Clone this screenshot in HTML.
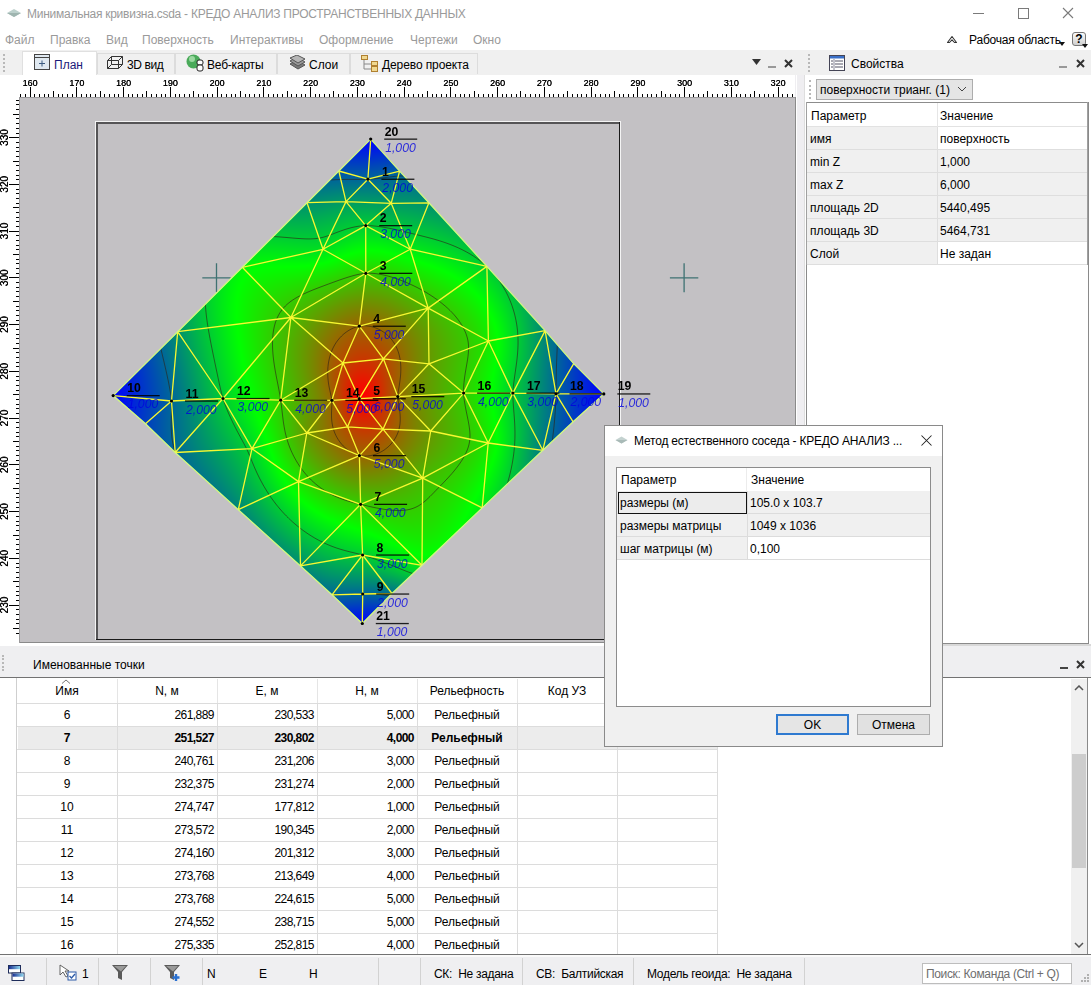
<!DOCTYPE html>
<html><head><meta charset="utf-8">
<style>
html,body{margin:0;padding:0}
body{width:1091px;height:985px;overflow:hidden;position:relative;font-family:"Liberation Sans",sans-serif;font-size:12px;color:#000;background:#fff}
.a{position:absolute;white-space:nowrap}
.t{position:absolute;white-space:nowrap;line-height:14px}
.gray{color:#9a9a9a}
.bg0{background:#f0f0f0}
.grip{position:absolute;width:2px;border-left:2px dotted #b8b8b8}
.tab{position:absolute;top:53px;height:21px;background:#f0f0f0;border:1px solid #dcdcdc;border-bottom:none;box-sizing:border-box}
.tab.act{background:#fff;border-color:#e0e0e0;top:51px;height:25px}
.row{position:absolute;height:23px;box-sizing:border-box;border-bottom:1px solid #e3e3e3}
.cell{position:absolute;top:0;height:22px;line-height:22px;box-sizing:border-box;border-right:1px solid #e3e3e3;white-space:nowrap;overflow:hidden}
</style></head><body>

<!-- title bar -->
<svg class="a" style="left:6px;top:8px" width="16" height="10" viewBox="0 0 16 10"><path d="M1 5 L8 1 L15 5 L8 9 Z" fill="#bcd0cc"/><path d="M1 5 L8 9 L15 5" fill="#9fb5b0"/></svg>
<div class="t gray" style="left:27px;top:7px;letter-spacing:-0.26px">Минимальная кривизна.csda - КРЕДО АНАЛИЗ ПРОСТРАНСТВЕННЫХ ДАННЫХ</div>
<div class="a" style="left:973px;top:13px;width:11px;height:1px;background:#7a7a7a"></div>
<div class="a" style="left:1018px;top:8px;width:9px;height:9px;border:1px solid #7a7a7a"></div>
<svg class="a" style="left:1062px;top:7px" width="12" height="12"><path d="M1 1L11 11M11 1L1 11" stroke="#7a7a7a" stroke-width="1.1"/></svg>

<!-- menu -->
<div class="t gray" style="left:5px;top:33px">Файл</div>
<div class="t gray" style="left:50px;top:33px">Правка</div>
<div class="t gray" style="left:106px;top:33px">Вид</div>
<div class="t gray" style="left:142px;top:33px">Поверхность</div>
<div class="t gray" style="left:230px;top:33px">Интерактивы</div>
<div class="t gray" style="left:319px;top:33px">Оформление</div>
<div class="t gray" style="left:410px;top:33px">Чертежи</div>
<div class="t gray" style="left:473px;top:33px">Окно</div>
<svg class="a" style="left:946px;top:34px" width="12" height="10"><path d="M1.5 8.5 L6 2.5 L10.5 8.5 L8.5 8.5 L6 5.8 L3.5 8.5 Z" stroke="#333" fill="none" stroke-width="1.1" stroke-linejoin="round"/></svg>
<div class="t" style="left:969px;top:33px;letter-spacing:-0.2px">Рабочая область</div>
<svg class="a" style="left:1059px;top:42px" width="6" height="4"><path d="M0 0H6L3 4Z" fill="#111"/></svg><div class="a" style="left:1072px;top:32px;width:14px;height:14px;border:1px solid #777;border-radius:3px;background:linear-gradient(#fafafa,#cfcfcf);box-sizing:border-box;font-weight:bold;font-size:12px;line-height:13px;text-align:center">?</div><svg class="a" style="left:1082px;top:44px" width="6" height="4"><path d="M0 0H6L3 4Z" fill="#111"/></svg>

<!-- document tab strip -->
<div class="a bg0" style="left:0;top:50px;width:805px;height:25px"></div>
<div class="grip" style="left:3px;top:54px;height:18px"></div>
<div class="tab act" style="left:22px;width:75px"></div>
<div class="tab" style="left:97px;width:78px"></div>
<div class="tab" style="left:175px;width:102px"></div>
<div class="tab" style="left:277px;width:73px"></div>
<div class="tab" style="left:350px;width:128px"></div>
<div class="t" style="left:54px;top:58px;color:#1a1a7a">План</div>
<div class="t" style="left:127px;top:58px;letter-spacing:-0.4px">3D вид</div>
<div class="t" style="left:207px;top:58px;letter-spacing:-0.2px">Веб-карты</div>
<div class="t" style="left:309px;top:58px">Слои</div>
<div class="t" style="left:382px;top:58px;letter-spacing:-0.1px">Дерево проекта</div>
<div id="tabicons"><svg class="a" style="left:34px;top:54px" width="17" height="16"><rect x="0.5" y="0.5" width="15" height="15" fill="#dfe8f0" stroke="#444"/><path d="M0.5 3.5H15.5" stroke="#444"/><path d="M8 6.5V12.5M5 9.5H11" stroke="#3b5a80"/></svg><svg class="a" style="left:107px;top:56px" width="17" height="13"><path d="M0.5 4.5H11.5V12.5H0.5Z M0.5 4.5L4.5 0.5H15.5L11.5 4.5 M15.5 0.5V8.5L11.5 12.5 M4.5 0.5V8.5H15.5 M4.5 8.5L0.5 12.5" fill="none" stroke="#333"/></svg><svg class="a" style="left:186px;top:54px" width="18" height="18"><circle cx="7.5" cy="7.5" r="7" fill="#4aaa5a"/><circle cx="6" cy="5" r="3" fill="#9ad8a0"/><rect x="11" y="6" width="6" height="5" rx="2" fill="#fff" stroke="#222"/><rect x="11" y="11" width="6" height="6" rx="2" fill="#fff" stroke="#222"/></svg><svg class="a" style="left:289px;top:55px" width="17" height="15"><path d="M1 9L9 14L16 10L8 5Z" fill="#7a7a7a" stroke="#555"/><path d="M1 6L9 11L16 7L8 2Z" fill="#9a9a9a" stroke="#555"/><path d="M1 3L9 8L16 4L8 0Z" fill="#b5b5b5" stroke="#555"/></svg><svg class="a" style="left:361px;top:55px" width="18" height="17"><path d="M3 4V14H10M3 9H10" stroke="#888" fill="none"/><rect x="0.5" y="0.5" width="6" height="4" fill="#f0d890" stroke="#b08030"/><rect x="10.5" y="6.5" width="6" height="4" fill="#f0d890" stroke="#b08030"/><rect x="10.5" y="11.5" width="6" height="5" fill="#f0d890" stroke="#b08030"/></svg></div><!--/tabicons-->

<!-- map panel controls -->
<svg class="a" style="left:752px;top:59px" width="9" height="6"><path d="M0 0H9L4.5 6Z" fill="#333"/></svg>
<div class="a" style="left:768px;top:66px;width:8px;height:2px;background:#999"></div>
<svg class="a" style="left:784px;top:59px" width="9" height="9"><path d="M1 1L8 8M8 1L1 8" stroke="#333" stroke-width="2"/></svg>

<!-- rulers + map -->
<canvas id="map" class="a" width="797" height="568" style="left:0;top:75px"></canvas>

<!-- gap between map & properties -->
<div class="a" style="left:795px;top:75px;width:10px;height:571px;background:#efeef1"></div><div class="a" style="left:795px;top:97px;width:1px;height:546px;background:#8a8a8a"></div><div class="a" style="left:796px;top:75px;width:1px;height:568px;background:#fff"></div><div class="a" style="left:804px;top:75px;width:1px;height:571px;background:#fff"></div>

<!-- properties panel -->
<div class="a bg0" style="left:805px;top:50px;width:286px;height:25px"></div>
<div class="grip" style="left:808px;top:54px;height:18px"></div>
<div id="propicon"><svg class="a" style="left:829px;top:55px" width="16" height="16"><rect x="0.5" y="0.5" width="15" height="15" fill="#fff" stroke="#445"/><rect x="1" y="1" width="14" height="2.5" fill="#3a70c8"/><path d="M2 6H4M2 9H4M2 12H4M6 6H14M6 9H14M6 12H14" stroke="#556"/><path d="M5 4V15" stroke="#889"/></svg></div><!--/propicon-->
<div class="t" style="left:851px;top:57px">Свойства</div>
<div class="a" style="left:1059px;top:66px;width:8px;height:2px;background:#999"></div>
<svg class="a" style="left:1076px;top:59px" width="9" height="9"><path d="M1 1L8 8M8 1L1 8" stroke="#333" stroke-width="2"/></svg>
<div class="a" style="left:805px;top:75px;width:286px;height:571px;background:#fff"></div>
<div class="a" style="left:804px;top:75px;width:1px;height:571px;background:#dedede"></div><div class="a" style="left:806px;top:102px;width:283px;height:542px;border:1px solid #8a8a8a;box-sizing:border-box"></div><div class="a" style="left:805px;top:644px;width:286px;height:2px;background:#d8d8d8"></div>
<div class="grip" style="left:809px;top:80px;height:19px"></div>
<div class="a" style="left:816px;top:79px;width:157px;height:21px;background:#e5e5e5;border:1px solid #adadad;box-sizing:border-box"></div>
<div class="t" style="left:820px;top:83px">поверхности трианг. (1)</div>
<svg class="a" style="left:957px;top:86px" width="10" height="6"><path d="M1 1L5 5L9 1" stroke="#444" fill="none"/></svg>
<div id="props"><div class="a" style="left:806px;top:102px;width:282px;height:1px;background:#8c8c8c"></div><div class="a" style="left:806px;top:102px;width:1px;height:163px;background:#a0a0a0"></div><div class="a" style="left:1087px;top:102px;width:1px;height:163px;background:#a0a0a0"></div><div class="a" style="left:807px;top:103px;width:280px;height:24px;background:#fff;border-bottom:1px solid #e2e2e2;box-sizing:border-box"></div><div class="t" style="left:811px;top:109px">Параметр</div><div class="t" style="left:940px;top:109px">Значение</div><div class="a" style="left:807px;top:127px;width:130px;height:23px;background:#f0f0f0;border-bottom:1px solid #dedede;box-sizing:border-box"></div><div class="a" style="left:937px;top:127px;width:150px;height:23px;background:#fff;border-bottom:1px solid #dedede;border-left:1px solid #dedede;box-sizing:border-box"></div><div class="t" style="left:810px;top:132px">имя</div><div class="t" style="left:940px;top:132px">поверхность</div><div class="a" style="left:807px;top:150px;width:130px;height:23px;background:#f0f0f0;border-bottom:1px solid #dedede;box-sizing:border-box"></div><div class="a" style="left:937px;top:150px;width:150px;height:23px;background:#f0f0f0;border-bottom:1px solid #dedede;border-left:1px solid #dedede;box-sizing:border-box"></div><div class="t" style="left:810px;top:155px">min Z</div><div class="t" style="left:940px;top:155px">1,000</div><div class="a" style="left:807px;top:173px;width:130px;height:23px;background:#f0f0f0;border-bottom:1px solid #dedede;box-sizing:border-box"></div><div class="a" style="left:937px;top:173px;width:150px;height:23px;background:#f0f0f0;border-bottom:1px solid #dedede;border-left:1px solid #dedede;box-sizing:border-box"></div><div class="t" style="left:810px;top:178px">max Z</div><div class="t" style="left:940px;top:178px">6,000</div><div class="a" style="left:807px;top:196px;width:130px;height:23px;background:#f0f0f0;border-bottom:1px solid #dedede;box-sizing:border-box"></div><div class="a" style="left:937px;top:196px;width:150px;height:23px;background:#f0f0f0;border-bottom:1px solid #dedede;border-left:1px solid #dedede;box-sizing:border-box"></div><div class="t" style="left:810px;top:201px">площадь 2D</div><div class="t" style="left:940px;top:201px">5440,495</div><div class="a" style="left:807px;top:219px;width:130px;height:23px;background:#f0f0f0;border-bottom:1px solid #dedede;box-sizing:border-box"></div><div class="a" style="left:937px;top:219px;width:150px;height:23px;background:#f0f0f0;border-bottom:1px solid #dedede;border-left:1px solid #dedede;box-sizing:border-box"></div><div class="t" style="left:810px;top:224px">площадь 3D</div><div class="t" style="left:940px;top:224px">5464,731</div><div class="a" style="left:807px;top:242px;width:130px;height:23px;background:#f0f0f0;border-bottom:1px solid #dedede;box-sizing:border-box"></div><div class="a" style="left:937px;top:242px;width:150px;height:23px;background:#fff;border-bottom:1px solid #dedede;border-left:1px solid #dedede;box-sizing:border-box"></div><div class="t" style="left:810px;top:247px">Слой</div><div class="t" style="left:940px;top:247px">Не задан</div><div class="a" style="left:937px;top:103px;width:1px;height:24px;background:#e6e6e6"></div></div><!--/props-->

<!-- bottom panel -->
<div class="a" style="left:0;top:643px;width:805px;height:3px;background:#fff"></div><div class="a" style="left:0;top:646px;width:1091px;height:32px;background:#efeff1;border-bottom:1px solid #727272;box-sizing:border-box"></div>
<div class="grip" style="left:2px;top:655px;height:16px"></div>
<div class="t" style="left:33px;top:658px">Именованные точки</div>
<div class="a" style="left:1060px;top:667px;width:8px;height:2px;background:#444"></div>
<svg class="a" style="left:1076px;top:660px" width="9" height="9"><path d="M1 1L8 8M8 1L1 8" stroke="#333" stroke-width="2"/></svg>
<div class="a" style="left:0;top:678px;width:1091px;height:277px;background:#fff"></div>
<div class="a" style="left:1087px;top:678px;width:1px;height:277px;background:#8a8a8a"></div>
<div id="table"><div class="a" style="left:16px;top:678px;width:1px;height:276px;background:#cfcfcf"></div><div class="a" style="left:117px;top:679px;width:1px;height:24px;background:#e5e5e5"></div><div class="t" style="left:17px;width:100px;text-align:center;top:684px">Имя</div><div class="a" style="left:217px;top:679px;width:1px;height:24px;background:#e5e5e5"></div><div class="t" style="left:117px;width:100px;text-align:center;top:684px">N, м</div><div class="a" style="left:317px;top:679px;width:1px;height:24px;background:#e5e5e5"></div><div class="t" style="left:217px;width:100px;text-align:center;top:684px">E, м</div><div class="a" style="left:417px;top:679px;width:1px;height:24px;background:#e5e5e5"></div><div class="t" style="left:317px;width:100px;text-align:center;top:684px">H, м</div><div class="a" style="left:517px;top:679px;width:1px;height:24px;background:#e5e5e5"></div><div class="t" style="left:417px;width:100px;text-align:center;top:684px">Рельефность</div><div class="a" style="left:617px;top:679px;width:1px;height:24px;background:#e5e5e5"></div><div class="t" style="left:517px;width:100px;text-align:center;top:684px">Код УЗ</div><div class="a" style="left:717px;top:679px;width:1px;height:24px;background:#e5e5e5"></div><svg class="a" style="left:61px;top:679px" width="10" height="5"><path d="M1 4.5L5 1L9 4.5" stroke="#777" fill="none"/></svg><div class="a" style="left:17px;top:703px;width:700px;height:1px;background:#dcdcdc"></div><div class="a" style="left:17px;top:726px;width:700px;height:1px;background:#dcdcdc"></div><div class="t" style="left:17px;width:100px;text-align:center;top:708px;">6</div><div class="t" style="left:117px;width:97px;text-align:right;top:708px;letter-spacing:-0.55px;">261,889</div><div class="t" style="left:217px;width:97px;text-align:right;top:708px;letter-spacing:-0.55px;">230,533</div><div class="t" style="left:317px;width:97px;text-align:right;top:708px;letter-spacing:-0.55px;">5,000</div><div class="t" style="left:417px;width:100px;text-align:center;top:708px;">Рельефный</div><div class="a" style="left:18px;top:727px;width:699px;height:22px;background:#ececec"></div><div class="a" style="left:17px;top:749px;width:700px;height:1px;background:#dcdcdc"></div><div class="t" style="left:17px;width:100px;text-align:center;top:731px;font-weight:bold;">7</div><div class="t" style="left:117px;width:97px;text-align:right;top:731px;letter-spacing:-0.55px;font-weight:bold;">251,527</div><div class="t" style="left:217px;width:97px;text-align:right;top:731px;letter-spacing:-0.55px;font-weight:bold;">230,802</div><div class="t" style="left:317px;width:97px;text-align:right;top:731px;letter-spacing:-0.55px;font-weight:bold;">4,000</div><div class="t" style="left:417px;width:100px;text-align:center;top:731px;font-weight:bold;">Рельефный</div><div class="a" style="left:17px;top:772px;width:700px;height:1px;background:#dcdcdc"></div><div class="t" style="left:17px;width:100px;text-align:center;top:754px;">8</div><div class="t" style="left:117px;width:97px;text-align:right;top:754px;letter-spacing:-0.55px;">240,761</div><div class="t" style="left:217px;width:97px;text-align:right;top:754px;letter-spacing:-0.55px;">231,206</div><div class="t" style="left:317px;width:97px;text-align:right;top:754px;letter-spacing:-0.55px;">3,000</div><div class="t" style="left:417px;width:100px;text-align:center;top:754px;">Рельефный</div><div class="a" style="left:17px;top:795px;width:700px;height:1px;background:#dcdcdc"></div><div class="t" style="left:17px;width:100px;text-align:center;top:777px;">9</div><div class="t" style="left:117px;width:97px;text-align:right;top:777px;letter-spacing:-0.55px;">232,375</div><div class="t" style="left:217px;width:97px;text-align:right;top:777px;letter-spacing:-0.55px;">231,274</div><div class="t" style="left:317px;width:97px;text-align:right;top:777px;letter-spacing:-0.55px;">2,000</div><div class="t" style="left:417px;width:100px;text-align:center;top:777px;">Рельефный</div><div class="a" style="left:17px;top:818px;width:700px;height:1px;background:#dcdcdc"></div><div class="t" style="left:17px;width:100px;text-align:center;top:800px;">10</div><div class="t" style="left:117px;width:97px;text-align:right;top:800px;letter-spacing:-0.55px;">274,747</div><div class="t" style="left:217px;width:97px;text-align:right;top:800px;letter-spacing:-0.55px;">177,812</div><div class="t" style="left:317px;width:97px;text-align:right;top:800px;letter-spacing:-0.55px;">1,000</div><div class="t" style="left:417px;width:100px;text-align:center;top:800px;">Рельефный</div><div class="a" style="left:17px;top:841px;width:700px;height:1px;background:#dcdcdc"></div><div class="t" style="left:17px;width:100px;text-align:center;top:823px;">11</div><div class="t" style="left:117px;width:97px;text-align:right;top:823px;letter-spacing:-0.55px;">273,572</div><div class="t" style="left:217px;width:97px;text-align:right;top:823px;letter-spacing:-0.55px;">190,345</div><div class="t" style="left:317px;width:97px;text-align:right;top:823px;letter-spacing:-0.55px;">2,000</div><div class="t" style="left:417px;width:100px;text-align:center;top:823px;">Рельефный</div><div class="a" style="left:17px;top:864px;width:700px;height:1px;background:#dcdcdc"></div><div class="t" style="left:17px;width:100px;text-align:center;top:846px;">12</div><div class="t" style="left:117px;width:97px;text-align:right;top:846px;letter-spacing:-0.55px;">274,160</div><div class="t" style="left:217px;width:97px;text-align:right;top:846px;letter-spacing:-0.55px;">201,312</div><div class="t" style="left:317px;width:97px;text-align:right;top:846px;letter-spacing:-0.55px;">3,000</div><div class="t" style="left:417px;width:100px;text-align:center;top:846px;">Рельефный</div><div class="a" style="left:17px;top:887px;width:700px;height:1px;background:#dcdcdc"></div><div class="t" style="left:17px;width:100px;text-align:center;top:869px;">13</div><div class="t" style="left:117px;width:97px;text-align:right;top:869px;letter-spacing:-0.55px;">273,768</div><div class="t" style="left:217px;width:97px;text-align:right;top:869px;letter-spacing:-0.55px;">213,649</div><div class="t" style="left:317px;width:97px;text-align:right;top:869px;letter-spacing:-0.55px;">4,000</div><div class="t" style="left:417px;width:100px;text-align:center;top:869px;">Рельефный</div><div class="a" style="left:17px;top:910px;width:700px;height:1px;background:#dcdcdc"></div><div class="t" style="left:17px;width:100px;text-align:center;top:892px;">14</div><div class="t" style="left:117px;width:97px;text-align:right;top:892px;letter-spacing:-0.55px;">273,768</div><div class="t" style="left:217px;width:97px;text-align:right;top:892px;letter-spacing:-0.55px;">224,615</div><div class="t" style="left:317px;width:97px;text-align:right;top:892px;letter-spacing:-0.55px;">5,000</div><div class="t" style="left:417px;width:100px;text-align:center;top:892px;">Рельефный</div><div class="a" style="left:17px;top:933px;width:700px;height:1px;background:#dcdcdc"></div><div class="t" style="left:17px;width:100px;text-align:center;top:915px;">15</div><div class="t" style="left:117px;width:97px;text-align:right;top:915px;letter-spacing:-0.55px;">274,552</div><div class="t" style="left:217px;width:97px;text-align:right;top:915px;letter-spacing:-0.55px;">238,715</div><div class="t" style="left:317px;width:97px;text-align:right;top:915px;letter-spacing:-0.55px;">5,000</div><div class="t" style="left:417px;width:100px;text-align:center;top:915px;">Рельефный</div><div class="a" style="left:17px;top:956px;width:700px;height:1px;background:#dcdcdc"></div><div class="t" style="left:17px;width:100px;text-align:center;top:938px;">16</div><div class="t" style="left:117px;width:97px;text-align:right;top:938px;letter-spacing:-0.55px;">275,335</div><div class="t" style="left:217px;width:97px;text-align:right;top:938px;letter-spacing:-0.55px;">252,815</div><div class="t" style="left:317px;width:97px;text-align:right;top:938px;letter-spacing:-0.55px;">4,000</div><div class="t" style="left:417px;width:100px;text-align:center;top:938px;">Рельефный</div><div class="a" style="left:117px;top:704px;width:1px;height:250px;background:#dcdcdc"></div><div class="a" style="left:217px;top:704px;width:1px;height:250px;background:#dcdcdc"></div><div class="a" style="left:317px;top:704px;width:1px;height:250px;background:#dcdcdc"></div><div class="a" style="left:417px;top:704px;width:1px;height:250px;background:#dcdcdc"></div><div class="a" style="left:517px;top:704px;width:1px;height:250px;background:#dcdcdc"></div><div class="a" style="left:617px;top:704px;width:1px;height:250px;background:#dcdcdc"></div><div class="a" style="left:717px;top:704px;width:1px;height:250px;background:#dcdcdc"></div></div><!--/table-->
<!-- scrollbar -->
<div class="a bg0" style="left:1071px;top:679px;width:16px;height:275px"></div>
<svg class="a" style="left:1074px;top:685px" width="10" height="6"><path d="M1 5L5 1L9 5" stroke="#555" fill="none" stroke-width="1.5"/></svg>
<div class="a" style="left:1072px;top:754px;width:14px;height:114px;background:#cdcdcd"></div>
<svg class="a" style="left:1074px;top:942px" width="10" height="6"><path d="M1 1L5 5L9 1" stroke="#555" fill="none" stroke-width="1.5"/></svg>

<!-- status bar -->
<div class="a" style="left:0;top:954px;width:1091px;height:31px;background:#efeff1;border-top:1px solid #727272;box-sizing:border-box"></div><div class="a" style="left:0;top:955px;width:1091px;height:2px;background:#fafafa"></div>
<div id="status"><div class="a" style="left:46px;top:958px;width:1px;height:27px;background:#d2d2d2"></div><div class="a" style="left:98px;top:958px;width:1px;height:27px;background:#d2d2d2"></div><div class="a" style="left:150px;top:958px;width:1px;height:27px;background:#d2d2d2"></div><div class="a" style="left:202px;top:958px;width:1px;height:27px;background:#d2d2d2"></div><div class="a" style="left:378px;top:958px;width:1px;height:27px;background:#d2d2d2"></div><div class="a" style="left:420px;top:958px;width:1px;height:27px;background:#d2d2d2"></div><div class="a" style="left:522px;top:958px;width:1px;height:27px;background:#d2d2d2"></div><div class="a" style="left:633px;top:958px;width:1px;height:27px;background:#d2d2d2"></div><div class="a" style="left:804px;top:958px;width:1px;height:27px;background:#d2d2d2"></div><div class="t" style="left:207px;top:967px">N</div><div class="t" style="left:259px;top:967px">E</div><div class="t" style="left:309px;top:967px">H</div><div class="t" style="left:434px;top:967px;letter-spacing:-0.3px">СК:&nbsp; Не задана</div><div class="t" style="left:536px;top:967px;letter-spacing:-0.3px">СВ:&nbsp; Балтийская</div><div class="t" style="left:647px;top:967px;letter-spacing:-0.3px">Модель геоида:&nbsp; Не задана</div><div class="a" style="left:922px;top:963px;width:150px;height:21px;background:#fff;border:1px solid #bdbdbd;box-sizing:border-box"></div><div class="t" style="left:926px;top:967px;color:#6e6e6e;letter-spacing:-0.35px">Поиск: Команда (Ctrl + Q)</div><svg class="a" style="left:8px;top:965px" width="17" height="16"><defs><linearGradient id="wg" x1="0" x2="1"><stop offset="0" stop-color="#1a2f90"/><stop offset="1" stop-color="#8fd8f0"/></linearGradient></defs><rect x="0.5" y="0.5" width="12" height="7.5" fill="#fff" stroke="#1e2c5a"/><rect x="1" y="1" width="11" height="3.2" fill="url(#wg)"/><rect x="4" y="8" width="12" height="7.5" fill="#fff" stroke="#1e2c5a"/><rect x="4.5" y="8.5" width="11" height="3.2" fill="url(#wg)"/></svg><svg class="a" style="left:59px;top:964px" width="20" height="18"><path d="M1 1L1 11L4 8L7 13L9 12L6 7L10 7Z" fill="#fff" stroke="#555" stroke-width="0.9"/><rect x="9" y="8" width="8" height="8" fill="#fff" stroke="#2c5aa8"/><path d="M10.5 12L12.5 14L16 10" stroke="#2c5aa8" fill="none" stroke-width="1.3"/></svg><div class="t" style="left:82px;top:967px">1</div><svg class="a" style="left:111px;top:964px" width="18" height="18"><path d="M1 1H17L11 8V16L7 14V8Z" fill="#5a5a5a"/><path d="M3 2H15L10 7.5" fill="#9a9a9a"/></svg><svg class="a" style="left:163px;top:964px" width="18" height="18"><path d="M1 1H17L11 8V16L7 14V8Z" fill="#5a5a5a"/><path d="M3 2H15L10 7.5" fill="#9a9a9a"/><path d="M13 10V17M9.5 13.5H16.5" stroke="#2a70d0" stroke-width="2.4"/></svg><svg class="a" style="left:1078px;top:973px" width="12" height="12"><g fill="#b0b0b0"><rect x="9" y="1" width="2" height="2"/><rect x="6" y="4" width="2" height="2"/><rect x="9" y="4" width="2" height="2"/><rect x="3" y="7" width="2" height="2"/><rect x="6" y="7" width="2" height="2"/><rect x="9" y="7" width="2" height="2"/></g></svg></div><!--/status-->

<!-- dialog -->
<div id="dialog"><div class="a" style="left:604px;top:425px;width:339px;height:322px;background:#f0f0f0;border:1px solid #8a8a8a;box-sizing:border-box"></div><div class="a" style="left:605px;top:426px;width:337px;height:30px;background:#fff"></div><svg class="a" style="left:615px;top:436px" width="13" height="8"><path d="M0.5 4L6.5 0.5L12.5 4L6.5 7.5Z" fill="#c4d2d0"/><path d="M0.5 4L6.5 7.5L12.5 4" fill="#a9bab7"/></svg><div class="t" style="left:634px;top:434px;letter-spacing:-0.2px">Метод естественного соседа - КРЕДО АНАЛИЗ ...</div><svg class="a" style="left:921px;top:435px" width="11" height="11"><path d="M0.5 0.5L10.5 10.5M10.5 0.5L0.5 10.5" stroke="#222" stroke-width="1.05"/></svg><div class="a" style="left:616px;top:467px;width:315px;height:240px;background:#fff;border:1px solid #8c8c8c;box-sizing:border-box"></div><div class="t" style="left:621px;top:473px">Параметр</div><div class="t" style="left:751px;top:473px">Значение</div><div class="a" style="left:746px;top:468px;width:1px;height:24px;background:#ececec"></div><div class="a" style="left:617px;top:491px;width:130px;height:23px;background:#ececec;border-bottom:1px solid #dcdcdc;box-sizing:border-box"></div><div class="a" style="left:747px;top:491px;width:183px;height:23px;background:#f0f0f0;border-bottom:1px solid #dcdcdc;border-left:1px solid #dcdcdc;box-sizing:border-box"></div><div class="t" style="left:620px;top:496px">размеры (м)</div><div class="t" style="left:750px;top:496px">105.0 x 103.7</div><div class="a" style="left:617px;top:514px;width:130px;height:23px;background:#f0f0f0;border-bottom:1px solid #dcdcdc;box-sizing:border-box"></div><div class="a" style="left:747px;top:514px;width:183px;height:23px;background:#f0f0f0;border-bottom:1px solid #dcdcdc;border-left:1px solid #dcdcdc;box-sizing:border-box"></div><div class="t" style="left:620px;top:519px">размеры матрицы</div><div class="t" style="left:750px;top:519px">1049 x 1036</div><div class="a" style="left:617px;top:537px;width:130px;height:23px;background:#f0f0f0;border-bottom:1px solid #dcdcdc;box-sizing:border-box"></div><div class="a" style="left:747px;top:537px;width:183px;height:23px;background:#fff;border-bottom:1px solid #dcdcdc;border-left:1px solid #dcdcdc;box-sizing:border-box"></div><div class="t" style="left:620px;top:542px">шаг матрицы (м)</div><div class="t" style="left:750px;top:542px">0,100</div><div class="a" style="left:618px;top:492px;width:129px;height:22px;border:1.5px solid #111;box-sizing:border-box"></div><div class="a" style="left:776px;top:714px;width:73px;height:21px;background:#e5e5e5;border:2px solid #2f7ad0;box-sizing:border-box"></div><div class="t" style="left:776px;width:73px;text-align:center;top:718px">OK</div><div class="a" style="left:857px;top:714px;width:73px;height:21px;background:#e1e1e1;border:1px solid #adadad;box-sizing:border-box"></div><div class="t" style="left:857px;width:73px;text-align:center;top:718px">Отмена</div></div><!--/dialog-->

<script>
(function(){
const cv=document.getElementById('map');const ctx=cv.getContext('2d');
ctx.translate(0,-75);
ctx.fillStyle='#fff';ctx.fillRect(0,75,797,568);
ctx.fillStyle='#c3c1c4';ctx.fillRect(19,97,777,546);ctx.fillStyle='#8a8a8a';ctx.fillRect(19,642,777,1);ctx.fillStyle='#9a999b';ctx.fillRect(19,97,777,1);ctx.fillRect(19,97,1,546);
// top ruler
ctx.fillStyle='#000';
const SX=4.675,X0=29.6,Y0=137.2;
for(let e=158;e<=326;e++){const x=Math.round(X0+(e-160)*SX)+0.0;if(x<20||x>795)continue;let L=e%10==0?10:(e%5==0?6:3);ctx.fillRect(x,97-L,1,L);}
ctx.font="9px \"Liberation Sans\"";ctx.textAlign="center";ctx.textBaseline='alphabetic';
for(let e=160;e<=320;e+=10){const x=X0+(e-160)*SX;ctx.fillText(String(e),x+0.3,86);ctx.fillText(String(e),x+0.7,86);}
// left ruler
for(let n=340;n>=224;n--){const y=Math.round(Y0+(330-n)*SX);if(y<98||y>643)continue;let L=n%10==0?10:(n%5==0?6:3);ctx.fillRect(19-L,y,L,1);}
ctx.font='10px "Liberation Sans"';for(let n=330;n>=230;n-=10){const y=Y0+(330-n)*SX;ctx.save();ctx.translate(8,y+0.5);ctx.rotate(-Math.PI/2);ctx.fillText(String(n),0,0);ctx.fillText(String(n),0.4,0);ctx.restore();}
// frame
ctx.fillStyle='#f4f4f4';ctx.fillRect(95,121,526,1);ctx.fillRect(95,121,1,519);ctx.fillRect(620,121,1,519);
ctx.fillStyle='#555456';ctx.fillRect(96,122,524,2);ctx.fillRect(96,122,2,518);
ctx.fillStyle='#1a1a1a';ctx.fillRect(619,122,1,518);ctx.fillRect(96,639,524,1);
// crosshairs
ctx.strokeStyle='#3f7272';ctx.lineWidth=1.3;
[[216.5,277.8],[684.1,277.8]].forEach(([x,y])=>{ctx.beginPath();ctx.moveTo(x,y-14.5);ctx.lineTo(x,y+14.5);ctx.moveTo(x-14.2,y);ctx.lineTo(x+14.2,y);ctx.stroke();});
// vertices
const V={
P20:[370.7,139.1],P1:[367.9,179.2],P2:[365.7,225.6],P3:[365.8,273.3],P4:[359.3,326.2],P5:[359.3,398.7],P6:[359.4,455.6],P7:[360.6,504.3],P8:[362.6,555.0],P9:[362.7,594.0],P21:[362.3,623.5],
P10:[113.2,395.6],P11:[171.5,401.0],P12:[223.0,398.5],P13:[280.7,400.2],P14:[331.9,400.3],P15:[397.8,396.6],P16:[463.6,393.1],P17:[512.9,393.1],P18:[556.0,393.8],P19:[603.8,393.9],
Va:[338.8,171.0],Vb:[399.6,171.1],Vc:[307.0,202.7],Vd:[346.0,201.6],Ve:[391.2,203.3],Vf:[428.9,202.8],Vg:[323.0,249.3],Vh:[410.2,249.2],Vi:[290.9,317.5],Vj:[428.2,308.1],
Vk:[343.0,363.0],Vl:[383.4,358.8],Vm:[429.0,363.8],Vn:[306.8,433.0],Vo:[383.0,429.2],Vp:[430.7,431.0],Vq:[422.7,478.1],Vr:[298.5,481.6],Vs:[300.5,565.9],Vt:[422.0,565.3],
Vu:[332.0,594.8],Vv:[392.0,593.5],Vw:[488.4,341.0],Vx:[545.1,330.6],Vy:[573.7,363.6],Vz:[573.1,421.8],Vaa:[542.8,450.3],Vab:[488.2,443.0],Vac:[486.9,266.4],Vaf:[145.5,423.8],
Vag:[175.2,452.5],Vah:[252.0,448.7],Vai:[177.7,331.7],Vaj:[242.3,267.3],Vak:[347.6,426.8],Val:[482.2,507.9],Vam:[238.3,509.7]
};
const E=('P20-P1 Va-P1 Va-Vd P1-Vd P1-Ve P1-Vb Vb-Ve Vc-Vd Vc-Vg Vd-Ve Vd-Vg Vd-P2 Ve-Vf Ve-P2 Ve-Vh Vf-Vh P2-Vg P2-Vh P2-P3 '+
'Vaj-Vg Vaj-Vi Vg-P3 Vg-Vi Vh-P3 Vh-Vj Vh-Vac P3-Vi P3-Vj P3-P4 Vac-Vj Vac-Vw Vai-Vi Vai-P11 Vai-P12 Vi-P12 Vi-P13 Vi-P4 Vi-Vk '+
'P4-Vj P4-Vk P4-Vl Vj-Vl Vj-Vm Vj-Vw Vw-Vx Vw-Vm Vw-P16 Vw-P17 Vx-P17 Vx-P18 Vk-Vl Vk-P13 Vk-P14 Vk-P5 Vl-Vm Vl-P5 Vl-P15 Vm-P15 Vm-P16 '+
'P10-P11 P11-P12 P12-P13 P13-P14 P14-P5 P5-P15 P15-P16 P16-P17 P17-P18 P18-P19 P18-Vy P18-Vz P11-Vaf P11-Vag P12-Vag P12-Vah P13-Vah P13-Vn '+
'P14-Vn P14-Vak P5-Vak P5-Vo P15-Vo P15-Vp P16-Vp P16-Vab P17-Vab P17-Vaa P18-Vaa Vag-Vah Vah-Vn Vah-Vr Vah-Vam Vn-Vak Vn-P6 Vn-Vr '+
'Vak-Vo Vak-P6 Vo-Vp Vo-P6 Vo-Vq Vp-Vq Vp-Vab Vab-Vq Vab-Vaa Vab-Val P6-Vq P6-Vr P6-P7 Vr-P7 Vr-Vam Vr-Vs Vq-P7 Vq-Val Vq-Vt '+
'Vs-P7 Vs-P8 Vt-P7 Vt-P8 P7-P8 P8-P9 P9-P21 Vu-P8 Vu-P9 Vv-P8 Vv-P9').split(' ').map(s=>s.split('-'));
const B=['P10','Vai','Vaj','Vc','Va','P20','Vb','Vf','Vac','Vx','Vy','P19','Vz','Vaa','Val','Vt','Vv','P21','Vu','Vs','Vam','Vag','Vaf'];
// known elevations
const Z={P20:1,P1:2,P2:3,P3:4,P4:5,P5:6,P6:5,P7:4,P8:3,P9:2,P21:1,P10:1,P11:2,P12:3,P13:4,P14:5,P15:5,P16:4,P17:3,P18:2,P19:1};
// TPS
const ZI={Va:1.8,Vb:1.9,Vc:2.4,Vd:2.5,Ve:2.5,Vf:2.4,Vg:3.2,Vh:3.3,Vaj:3.4,Vai:2.4,Vi:4.15,Vj:4.2,Vk:5.3,Vl:5.3,Vm:4.5,Vn:4.5,Vo:5.3,Vp:4.5,Vq:4.2,Vr:3.75,Vs:2.35,Vt:3.3,Vu:2.0,Vv:2.1,Vw:3.7,Vx:2.3,Vy:1.6,Vz:1.6,Vaa:2.2,Vab:3.7,Vac:3.0,Vaf:1.6,Vag:2.0,Vah:3.1,Vak:5.3,Val:3.3,Vam:2.3};
const ZA=Object.assign({},Z,ZI);
const ks=Object.keys(ZA);const n=ks.length;const px=ks.map(k=>V[k][0]/100),py=ks.map(k=>V[k][1]/100),pz=ks.map(k=>ZA[k]);
function U(r2){return r2<=0?0:0.5*r2*Math.log(r2);}
const N=n+3;const M=[];for(let i=0;i<N;i++){M.push(new Float64Array(N+1));}
for(let i=0;i<n;i++){for(let j=0;j<n;j++){const dx=px[i]-px[j],dy=py[i]-py[j];M[i][j]=U(dx*dx+dy*dy);}M[i][n]=1;M[i][n+1]=px[i];M[i][n+2]=py[i];M[n][i]=1;M[n+1][i]=px[i];M[n+2][i]=py[i];M[i][N]=pz[i];}
for(let c=0;c<N;c++){let p=c;for(let r=c+1;r<N;r++)if(Math.abs(M[r][c])>Math.abs(M[p][c]))p=r;const t=M[c];M[c]=M[p];M[p]=t;for(let r=0;r<N;r++){if(r==c)continue;const f=M[r][c]/M[c][c];if(f==0)continue;for(let k=c;k<=N;k++)M[r][k]-=f*M[c][k];}}
const W=[];for(let i=0;i<N;i++)W.push(M[i][N]/M[i][i]);
function field(x,y){x/=100;y/=100;let s=W[n]+W[n+1]*x+W[n+2]*y;for(let i=0;i<n;i++){const dx=x-px[i],dy=y-py[i];s+=W[i]*U(dx*dx+dy*dy);}return s;}
window.__field=field;
// surface raster
const bx0=110,by0=136,bw=498,bh=490;
const off=document.createElement('canvas');off.width=bw;off.height=bh;const oc=off.getContext('2d');const id=oc.createImageData(bw,bh);const d=id.data;
const F=new Float32Array((bw+1)*(bh+1));
for(let j=0;j<=bh;j++)for(let i=0;i<=bw;i++){F[j*(bw+1)+i]=field(bx0+i,by0+j);}
function col(z){let t=(z-1)/5;if(t<0)t=0;if(t>1)t=1;let r,g,b;if(t<0.5){r=0;g=2*t;b=1-2*t;}else{r=2*t-1;g=2-2*t;b=0;}return [r*255,g*255,b*255];}
for(let j=0;j<bh;j++)for(let i=0;i<bw;i++){const z=(F[j*(bw+1)+i]+F[j*(bw+1)+i+1]+F[(j+1)*(bw+1)+i]+F[(j+1)*(bw+1)+i+1])/4;const c=col(z);const o=(j*bw+i)*4;d[o]=c[0];d[o+1]=c[1];d[o+2]=c[2];d[o+3]=255;}
oc.putImageData(id,0,0);
ctx.save();ctx.beginPath();B.forEach((k,i)=>{const p=V[k];if(i==0)ctx.moveTo(p[0],p[1]);else ctx.lineTo(p[0],p[1]);});ctx.closePath();ctx.clip();
ctx.drawImage(off,bx0,by0);
// contours (marching squares)
ctx.strokeStyle='rgba(45,35,25,0.62)';ctx.lineWidth=1;ctx.beginPath();
const st=2;
for(const lv of [2,3,4,5]){
 for(let j=0;j<bh;j+=st)for(let i=0;i<bw;i+=st){
  const g=(a,b)=>F[b*(bw+1)+a];
  const i2=Math.min(i+st,bw),j2=Math.min(j+st,bh);
  const a=g(i,j),b=g(i2,j),c=g(i2,j2),e=g(i,j2);
  const pts=[];
  const ed=(v1,v2,x1,y1,x2,y2)=>{if((v1<lv)!=(v2<lv)){const t=(lv-v1)/(v2-v1);pts.push([x1+(x2-x1)*t,y1+(y2-y1)*t]);}};
  ed(a,b,i,j,i2,j);ed(b,c,i2,j,i2,j2);ed(e,c,i,j2,i2,j2);ed(a,e,i,j,i,j2);
  if(pts.length>=2){ctx.moveTo(bx0+pts[0][0],by0+pts[0][1]);ctx.lineTo(bx0+pts[1][0],by0+pts[1][1]);if(pts.length==4){ctx.moveTo(bx0+pts[2][0],by0+pts[2][1]);ctx.lineTo(bx0+pts[3][0],by0+pts[3][1]);}}
 }
}
ctx.stroke();
ctx.restore();
// triangle lines
ctx.strokeStyle='#f8f830';ctx.lineWidth=1.3;ctx.beginPath();
E.forEach(([a,b])=>{ctx.moveTo(V[a][0],V[a][1]);ctx.lineTo(V[b][0],V[b][1]);});ctx.stroke();
ctx.strokeStyle='#d2fa80';ctx.lineWidth=1.3;ctx.beginPath();B.forEach((k,i)=>{const p=V[k];if(i==0)ctx.moveTo(p[0],p[1]);else ctx.lineTo(p[0],p[1]);});ctx.closePath();ctx.stroke();
// labels
const names=['P20','P1','P2','P3','P4','P5','P6','P7','P8','P9','P21','P10','P11','P12','P13','P14','P15','P16','P17','P18','P19'];
ctx.textAlign='left';
names.forEach(k=>{const [x,y]=V[k];const nm=k.slice(1);
 ctx.fillStyle='rgba(0,0,0,0.85)';ctx.fillRect(x+13.5,y-0.6,33,1.3);
 ctx.save();ctx.translate(x+14,0);ctx.scale(0.9,1);
 ctx.fillStyle='#000';ctx.font='bold 13.6px "Liberation Sans"';ctx.fillText(nm,0,y-3.5);
 ctx.fillStyle='rgba(0,0,225,0.8)';ctx.font='italic 13.6px "Liberation Sans"';ctx.fillText(Z[k].toFixed(3).replace('.',','),0.5,y+12.6);
 ctx.restore();
});
ctx.fillStyle='#000';names.forEach(k=>{const [x,y]=V[k];ctx.beginPath();ctx.arc(x,y,1.6,0,7);ctx.fill();});
})();
</script>
</body></html>
